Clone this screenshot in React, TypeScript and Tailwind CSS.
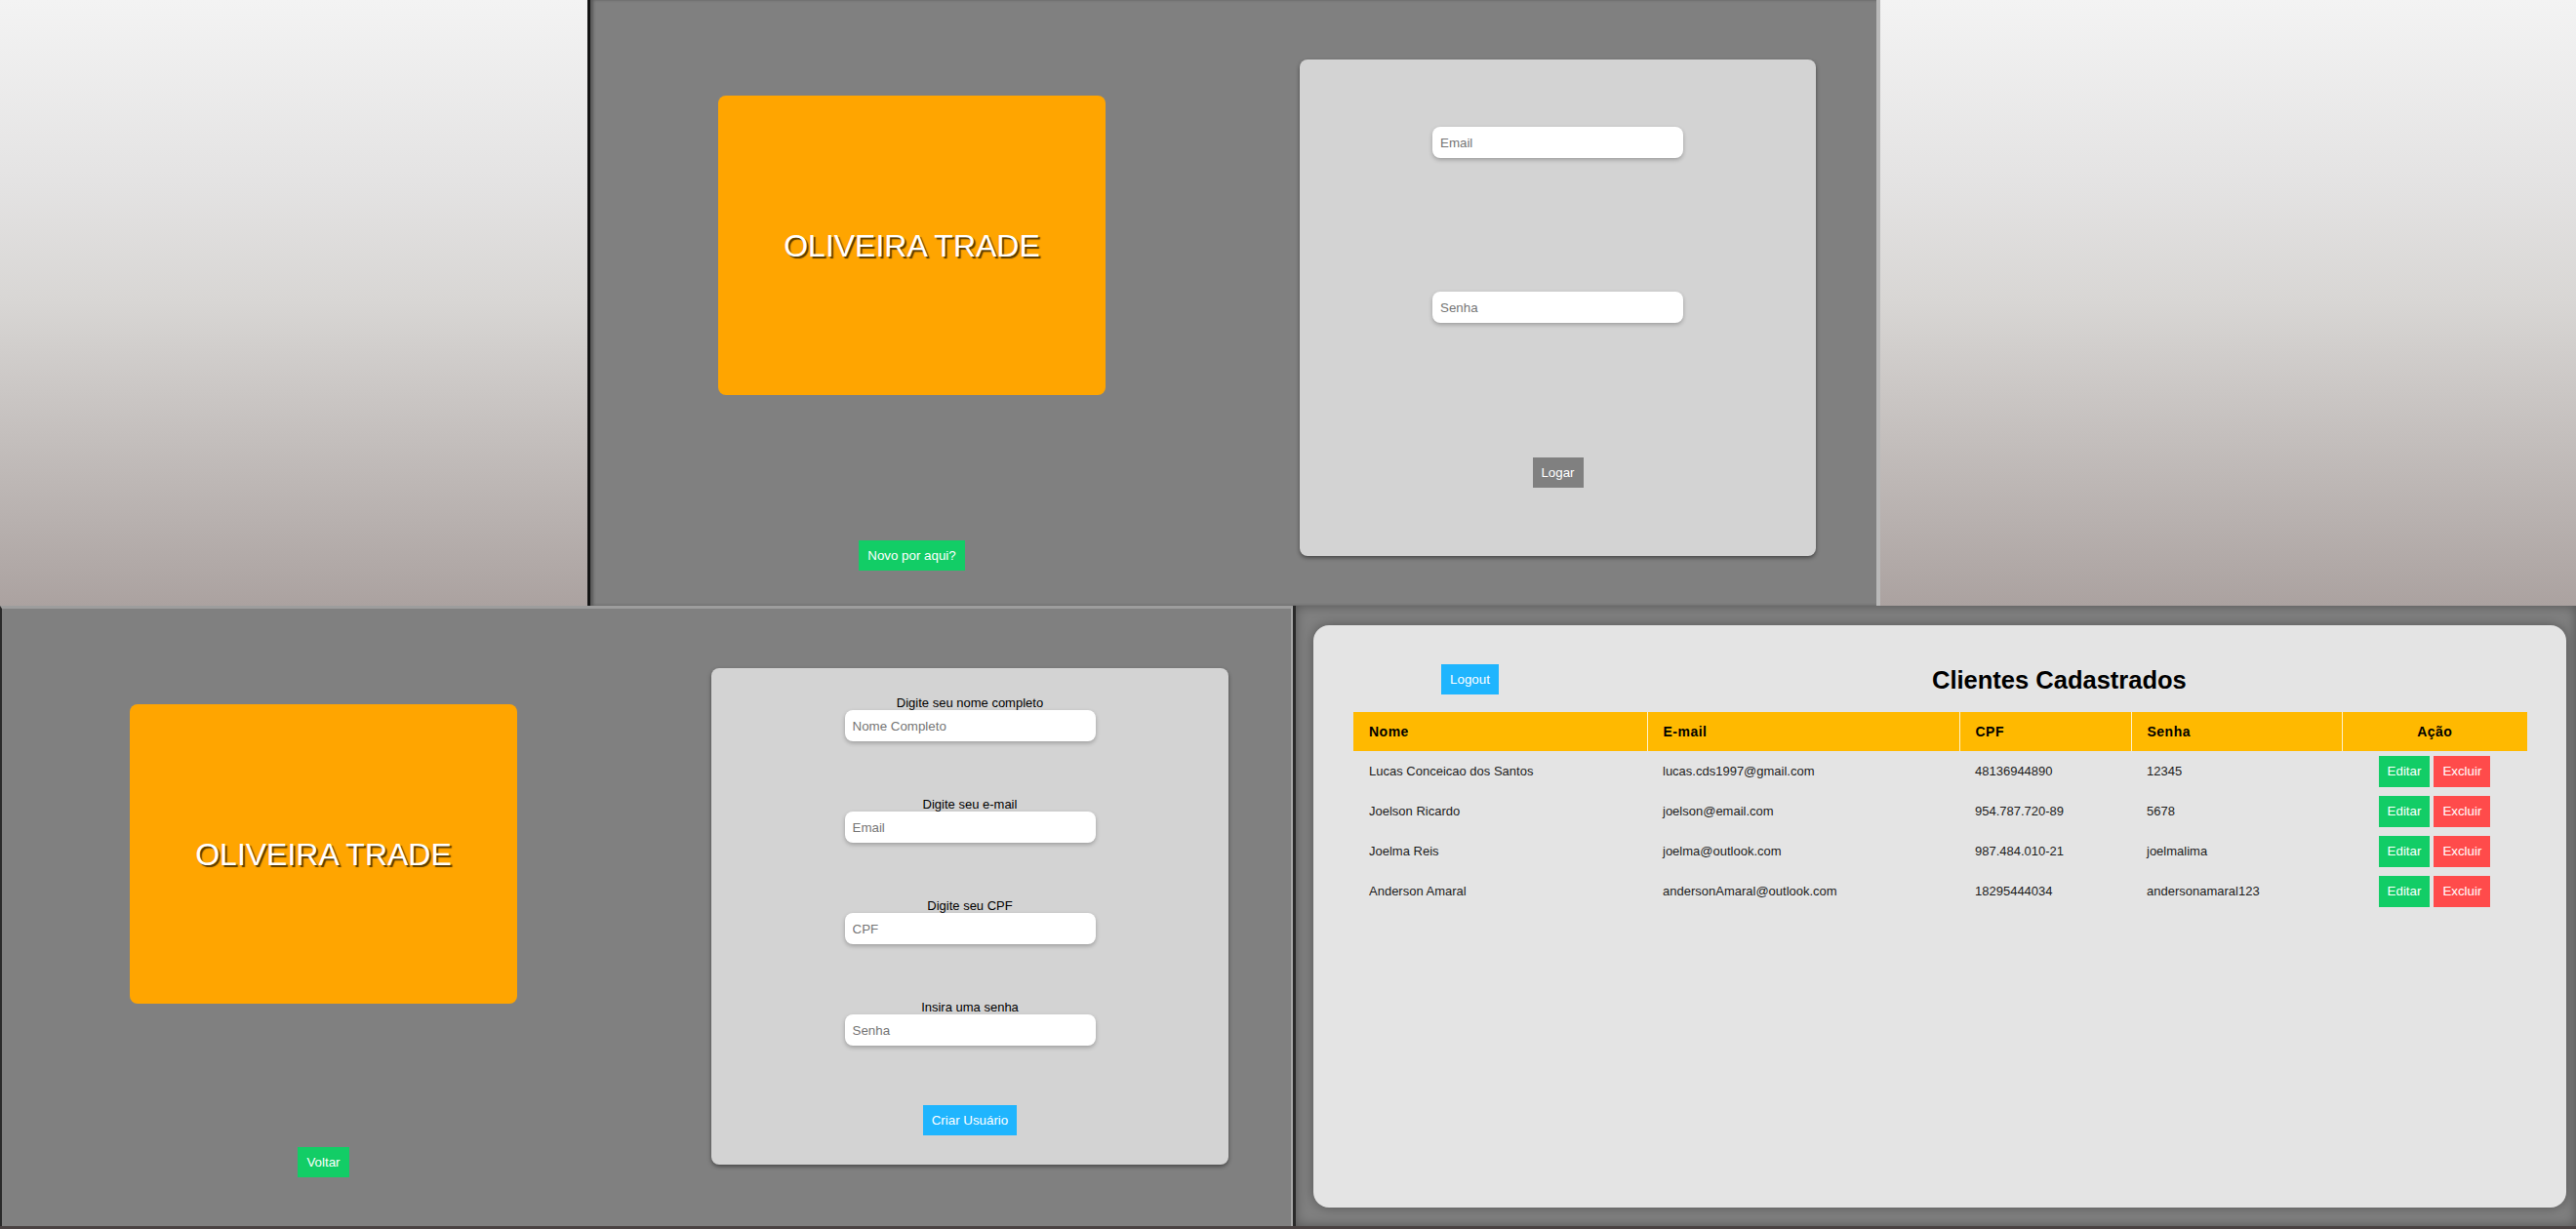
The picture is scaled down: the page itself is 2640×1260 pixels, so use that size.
import React from "react";

const btn = "h-[31px] px-[9px] text-[13.333px] leading-[15px] text-white flex items-center justify-center";

function Brand() {
  return (
    <div className="w-[397px] h-[307px] bg-[#ffa500] rounded-[8px] flex items-center justify-center">
      <span className="text-[32px] text-white [text-shadow:2px_2px_1px_rgba(60,40,0,0.85)]">OLIVEIRA TRADE</span>
    </div>
  );
}

function Field({ placeholder }: { placeholder: string }) {
  return (
    <input
      placeholder={placeholder}
      className="w-[257px] h-[32px] bg-white rounded-[8px] px-[8px] text-[13.333px] placeholder:text-[#757575] outline-none shadow-[0_2px_4px_rgba(0,0,0,0.25)]"
    />
  );
}

function AuthPanel({ btnLabel, card, className, top, gap }: { btnLabel: string; card: React.ReactNode; className: string; top: string; gap: string }) {
  return (
    <div className={"w-[1325px] h-full bg-[#808080] flex items-start " + className}>
      <div className={"ml-[131px] w-[397px] flex flex-col items-center " + top}>
        <Brand />
        <button className={btn + " bg-[#12cd66] " + gap}>{btnLabel}</button>
      </div>
      <div className="ml-[199px] pt-[61px]">{card}</div>
    </div>
  );
}

function LoginCard() {
  return (
    <div className="w-[529px] h-[509px] bg-[#d3d3d3] rounded-[8px] shadow-[0_2px_4px_rgba(0,0,0,0.45)] flex flex-col items-center">
      <div className="mt-[69px]"><Field placeholder="Email" /></div>
      <div className="mt-[137px]"><Field placeholder="Senha" /></div>
      <button className={btn + " mt-[138px] bg-[#808080] w-[52px]"}>Logar</button>
    </div>
  );
}

function RegisterCard() {
  const groups = [
    ["Digite seu nome completo", "Nome Completo"],
    ["Digite seu e-mail", "Email"],
    ["Digite seu CPF", "CPF"],
    ["Insira uma senha", "Senha"],
  ];
  return (
    <div className="w-[530px] h-[509px] bg-[#d3d3d3] rounded-[8px] shadow-[0_2px_4px_rgba(0,0,0,0.45)] flex flex-col items-center pt-[29px]">
      {groups.map(([l, p], i) => (
        <div key={l} className={"flex flex-col items-center " + (i > 0 ? "mt-[58px]" : "")}>
          <span className="text-[13px] leading-[14px] text-black">{l}</span>
          <Field placeholder={p} />
        </div>
      ))}
      <button className={btn + " mt-[61px] bg-[#1fb5fe]"}>Criar Usuário</button>
    </div>
  );
}

const rows = [
  ["Lucas Conceicao dos Santos", "lucas.cds1997@gmail.com", "48136944890", "12345"],
  ["Joelson Ricardo", "joelson@email.com", "954.787.720-89", "5678"],
  ["Joelma Reis", "joelma@outlook.com", "987.484.010-21", "joelmalima"],
  ["Anderson Amaral", "andersonAmaral@outlook.com", "18295444034", "andersonamaral123"],
];

function Clients() {
  const th = "h-[40px] bg-[#ffb900] text-left pl-[16px] text-[14px] font-bold tracking-[0.5px] text-black";
  return (
    <div className="flex-1 h-full bg-[#808080] border-l-[3px] border-l-[#2a2a2a] shadow-[inset_0_0_12px_rgba(0,0,0,0.35)] pt-[20px] pl-[18px]">
      <div className="w-[1284px] h-[597px] bg-[#e4e4e4] rounded-[16px] shadow-[0_0_12px_rgba(0,0,0,0.35)] flex flex-col">
        <div className="flex items-center h-[31px] mt-[40px]">
          <button className={btn + " ml-[131px] bg-[#1fb5fe] w-[59px]"}>Logout</button>
          <h1 className="ml-[444px] text-[25.5px] leading-[30px] font-bold text-black">Clientes Cadastrados</h1>
        </div>
        <table className="mt-[18px] ml-[41px] w-[1203px] border-collapse table-fixed">
          <colgroup>
            <col className="w-[301px]" />
            <col className="w-[320px]" />
            <col className="w-[176px]" />
            <col className="w-[216px]" />
            <col className="w-[190px]" />
          </colgroup>
          <thead>
            <tr>
              <th className={th}>Nome</th>
              <th className={th + " border-l border-l-[#fff3cc]"}>E-mail</th>
              <th className={th + " border-l border-l-[#fff3cc]"}>CPF</th>
              <th className={th + " border-l border-l-[#fff3cc]"}>Senha</th>
              <th className={th + " border-l border-l-[#fff3cc] !text-center !pl-0"}>Ação</th>
            </tr>
          </thead>
          <tbody>
            {rows.map((r) => (
              <tr key={r[0]} className="h-[41px]">
                {r.map((c, i) => (
                  <td key={i} className="pl-[16px] pt-[1px] text-[13px] text-[#1c1c1c] align-middle">{c}</td>
                ))}
                <td className="align-middle">
                  <div className="flex justify-center gap-[4px]">
                    <button className={btn + " h-[32px] bg-[#12cd66]"}>Editar</button>
                    <button className={btn + " h-[32px] bg-[#ff4b4b]"}>Excluir</button>
                  </div>
                </td>
              </tr>
            ))}
          </tbody>
        </table>
      </div>
    </div>
  );
}

const grad = "bg-[linear-gradient(to_bottom,#f3f3f3_0%,#e4e3e3_30%,#d8d6d4_50%,#c4bfbd_72%,#aba2a0_100%)]";

export default function App() {
  return (
    <div className="w-[2640px] h-[1260px] flex flex-col overflow-hidden font-['Liberation_Sans',Arial,sans-serif]">
      <div className="h-[621px] shrink-0 flex">
        <div className={"w-[602px] h-full " + grad} />
        <AuthPanel
          top="pt-[98px]"
          gap="mt-[149px]"
          btnLabel="Novo por aqui?"
          card={<LoginCard />}
          className="border-l-[3px] border-l-[#141414] border-r-[4px] border-r-[#b9b9b9] shadow-[inset_3px_0_3px_rgba(0,0,0,0.3)]"
        />
        <div className={"flex-1 h-full " + grad} />
      </div>
      <div className="h-[639px] shrink-0 flex border-b-[3px] border-b-[#4a4242]">
        <AuthPanel
          top="pt-[98px]"
          gap="mt-[147px]"
          btnLabel="Voltar"
          card={<RegisterCard />}
          className="border-t-[3px] border-t-[#9d9d9d] border-l-[2px] border-l-[#2a2a2a] border-r-[2px] border-r-[#a8a8a8]"
        />
        <Clients />
      </div>
    </div>
  );
}
